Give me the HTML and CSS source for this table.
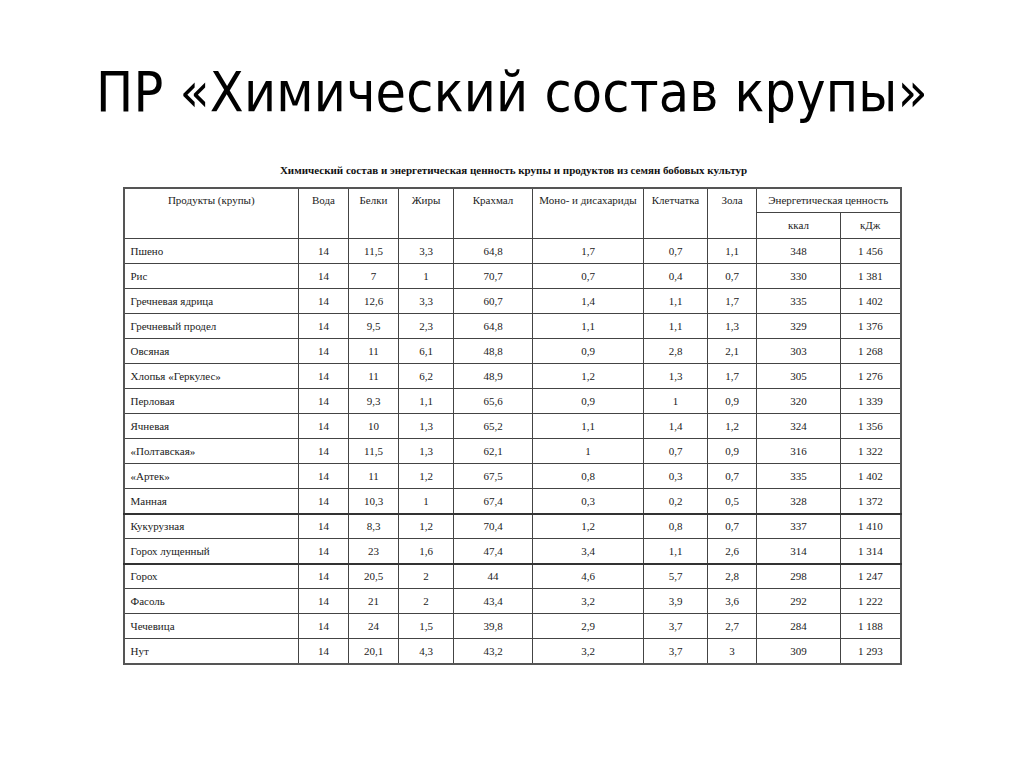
FILE: index.html
```html
<!DOCTYPE html>
<html lang="ru">
<head>
<meta charset="utf-8">
<link rel="stylesheet" href="styles.css">
</head>
<body>
<div class="slide">
  <h1 class="title">ПР «Химический состав крупы»</h1>
  <div class="caption">Химический состав и энергетическая ценность крупы и продуктов из семян бобовых культур</div>
  <table class="grid">
    <colgroup>
      <col class="c-name"><col class="c-w50"><col class="c-w50"><col class="c-w55"><col class="c-w79"><col class="c-w111"><col class="c-w64"><col class="c-w49"><col class="c-w84"><col class="c-w60">
    </colgroup>
    <thead>
      <tr class="h1">
        <th rowspan="2">Продукты (крупы)</th>
        <th rowspan="2">Вода</th>
        <th rowspan="2">Белки</th>
        <th rowspan="2">Жиры</th>
        <th rowspan="2">Крахмал</th>
        <th rowspan="2">Моно- и дисахариды</th>
        <th rowspan="2">Клетчатка</th>
        <th rowspan="2">Зола</th>
        <th colspan="2" class="energy">Энергетическая ценность</th>
      </tr>
      <tr class="h2">
        <th class="sub">ккал</th>
        <th class="sub">кДж</th>
      </tr>
    </thead>
    <tbody>
      <tr><td>Пшено</td><td>14</td><td>11,5</td><td>3,3</td><td>64,8</td><td>1,7</td><td>0,7</td><td>1,1</td><td>348</td><td>1 456</td></tr>
      <tr><td>Рис</td><td>14</td><td>7</td><td>1</td><td>70,7</td><td>0,7</td><td>0,4</td><td>0,7</td><td>330</td><td>1 381</td></tr>
      <tr><td>Гречневая ядрица</td><td>14</td><td>12,6</td><td>3,3</td><td>60,7</td><td>1,4</td><td>1,1</td><td>1,7</td><td>335</td><td>1 402</td></tr>
      <tr><td>Гречневый продел</td><td>14</td><td>9,5</td><td>2,3</td><td>64,8</td><td>1,1</td><td>1,1</td><td>1,3</td><td>329</td><td>1 376</td></tr>
      <tr><td>Овсяная</td><td>14</td><td>11</td><td>6,1</td><td>48,8</td><td>0,9</td><td>2,8</td><td>2,1</td><td>303</td><td>1 268</td></tr>
      <tr><td>Хлопья «Геркулес»</td><td>14</td><td>11</td><td>6,2</td><td>48,9</td><td>1,2</td><td>1,3</td><td>1,7</td><td>305</td><td>1 276</td></tr>
      <tr><td>Перловая</td><td>14</td><td>9,3</td><td>1,1</td><td>65,6</td><td>0,9</td><td>1</td><td>0,9</td><td>320</td><td>1 339</td></tr>
      <tr><td>Ячневая</td><td>14</td><td>10</td><td>1,3</td><td>65,2</td><td>1,1</td><td>1,4</td><td>1,2</td><td>324</td><td>1 356</td></tr>
      <tr><td>«Полтавская»</td><td>14</td><td>11,5</td><td>1,3</td><td>62,1</td><td>1</td><td>0,7</td><td>0,9</td><td>316</td><td>1 322</td></tr>
      <tr><td>«Артек»</td><td>14</td><td>11</td><td>1,2</td><td>67,5</td><td>0,8</td><td>0,3</td><td>0,7</td><td>335</td><td>1 402</td></tr>
      <tr><td>Манная</td><td>14</td><td>10,3</td><td>1</td><td>67,4</td><td>0,3</td><td>0,2</td><td>0,5</td><td>328</td><td>1 372</td></tr>
      <tr class="sep"><td>Кукурузная</td><td>14</td><td>8,3</td><td>1,2</td><td>70,4</td><td>1,2</td><td>0,8</td><td>0,7</td><td>337</td><td>1 410</td></tr>
      <tr><td>Горох лущенный</td><td>14</td><td>23</td><td>1,6</td><td>47,4</td><td>3,4</td><td>1,1</td><td>2,6</td><td>314</td><td>1 314</td></tr>
      <tr class="sep"><td>Горох</td><td>14</td><td>20,5</td><td>2</td><td>44</td><td>4,6</td><td>5,7</td><td>2,8</td><td>298</td><td>1 247</td></tr>
      <tr><td>Фасоль</td><td>14</td><td>21</td><td>2</td><td>43,4</td><td>3,2</td><td>3,9</td><td>3,6</td><td>292</td><td>1 222</td></tr>
      <tr><td>Чечевица</td><td>14</td><td>24</td><td>1,5</td><td>39,8</td><td>2,9</td><td>3,7</td><td>2,7</td><td>284</td><td>1 188</td></tr>
      <tr><td>Нут</td><td>14</td><td>20,1</td><td>4,3</td><td>43,2</td><td>3,2</td><td>3,7</td><td>3</td><td>309</td><td>1 293</td></tr>
    </tbody>
  </table>
</div>
</body>
</html>
```
FILE: styles.css
```css
html, body {
  margin: 0;
  padding: 0;
  background: #ffffff;
}

.slide {
  width: 1024px;
  height: 767px;
  display: flex;
  flex-direction: column;
  align-items: center;
  box-sizing: border-box;
  padding-top: 54px;
}

.title {
  margin: 0;
  font-family: "DejaVu Sans Condensed", "DejaVu Sans", sans-serif;
  font-weight: normal;
  font-size: 55px;
  letter-spacing: 0.2px;
  line-height: 76px;
  color: #000000;
  white-space: nowrap;
}

.caption {
  margin-top: 33px;
  font-family: "Liberation Serif", serif;
  font-weight: bold;
  font-size: 11px;
  line-height: 14px;
  color: #111111;
  padding-left: 3px;
}

.grid {
  margin-top: 10px;
  border-collapse: collapse;
  table-layout: fixed;
  width: 778px;
  font-family: "Liberation Serif", serif;
  font-size: 11px;
  color: #222222;
  border: 2px solid #555555;
}

.c-name { width: 175px; }
.c-w50 { width: 50px; }
.c-w55 { width: 55px; }
.c-w79 { width: 79px; }
.c-w111 { width: 111px; }
.c-w64 { width: 64px; }
.c-w49 { width: 49px; }
.c-w84 { width: 84px; }
.c-w60 { width: 60px; }

.grid th, .grid td {
  border: 1px solid #444444;
  padding: 0;
  font-weight: normal;
}

.grid th {
  vertical-align: top;
  padding-top: 5px;
  text-align: center;
}

.h1 { height: 24px; }
.h2 { height: 26px; }

.grid th.energy {
  padding-top: 5px;
  vertical-align: top;
}

.grid th.sub {
  vertical-align: middle;
  padding-top: 0;
}

.grid td {
  height: 24px;
  text-align: center;
}

.grid tr.sep td {
  border-top: 2px solid #333333;
  height: 23px;
}

.grid td:first-child {
  text-align: left;
  padding-left: 6px;
}
```
